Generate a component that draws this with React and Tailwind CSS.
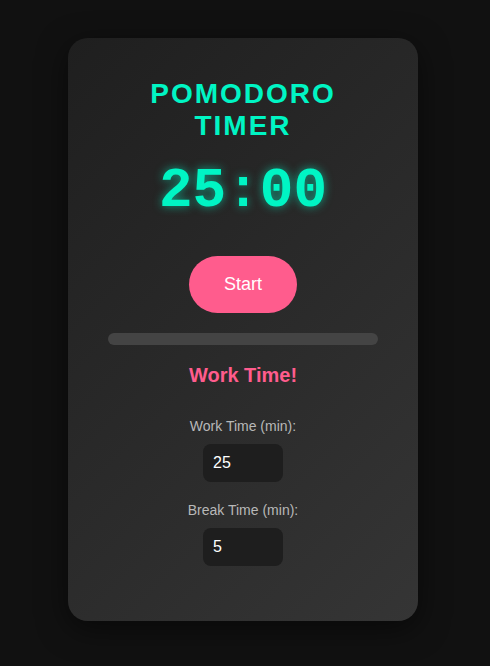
import React, { useState } from "react";

export default function App() {
  const [work, setWork] = useState(25);
  const [brk, setBrk] = useState(5);
  const mm = String(work).padStart(2, "0");

  return (
    <div
      className="min-h-screen bg-[#111111] flex justify-center pr-1 pt-[38px]"
      style={{ fontFamily: '"Liberation Sans", Arial, sans-serif' }}
    >
      <div className="w-[350px] h-[583px] rounded-[20px] bg-linear-135 from-[#1f1f1f] to-[#353535] shadow-[0_8px_30px_rgba(0,0,0,0.5)] px-10 pt-10 flex flex-col items-center text-center">
        <h1 className="text-[28px] leading-[1.15] font-bold tracking-[2px] text-[#00f5c4]">
          POMODORO TIMER
        </h1>
        <div
          className="mt-[18px] text-[56px] leading-[1.133] font-bold text-[#00f5c4] [text-shadow:0_0_10px_rgba(0,245,196,0.6)]"
          style={{ fontFamily: '"Liberation Mono", "Courier New", monospace' }}
        >
          {mm}:00
        </div>
        <button className="mt-[32px] w-[108px] h-[57px] rounded-full bg-[#ff5c8d] text-white text-[18px]">
          Start
        </button>
        <div className="mt-5 w-full h-3 rounded-full bg-[#444444]" />
        <h2 className="mt-[19px] text-[20px] leading-[23px] font-bold text-[#ff5c8d]">
          Work Time!
        </h2>
        <div className="mt-[31px] flex flex-col items-center">
          <label className="text-[14px] leading-4 text-[#b8b8b8]">Work Time (min):</label>
          <input
            type="number"
            value={work}
            onChange={(e) => setWork(Number(e.target.value) || 0)}
            className="mt-[10px] w-20 h-[38px] rounded-lg bg-[#1e1e1e] text-white text-[16px] pl-[10px] outline-none [appearance:textfield] [&::-webkit-inner-spin-button]:appearance-none"
          />
          <label className="mt-5 text-[14px] leading-4 text-[#b8b8b8]">Break Time (min):</label>
          <input
            type="number"
            value={brk}
            onChange={(e) => setBrk(Number(e.target.value) || 0)}
            className="mt-[10px] w-20 h-[38px] rounded-lg bg-[#1e1e1e] text-white text-[16px] pl-[10px] outline-none [appearance:textfield] [&::-webkit-inner-spin-button]:appearance-none"
          />
        </div>
      </div>
    </div>
  );
}
